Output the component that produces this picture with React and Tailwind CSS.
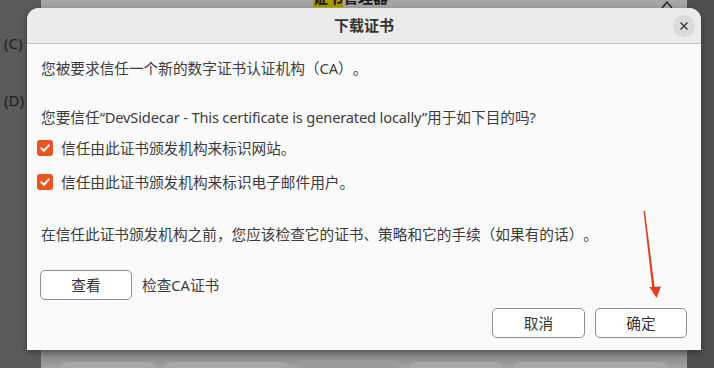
import React from "react";

const font = { fontFamily: '"Noto Sans", "Noto Sans CJK SC", sans-serif' };

const Check = () => (
  <span className="w-4 h-4 rounded-[3px] bg-[#e95420] flex items-center justify-center shrink-0">
    <svg width="12" height="12" viewBox="0 0 12 12" fill="none">
      <path d="M2.3 6.2 L4.9 8.7 L9.8 3.4" stroke="white" strokeWidth="2" strokeLinecap="round" strokeLinejoin="round" />
    </svg>
  </span>
);

const Button = ({ children, className = "" }) => (
  <button className={`h-[30px] rounded-[5px] border border-[#8f8ca0] bg-white text-[14.67px] text-[#333] ${className}`}>
    {children}
  </button>
);

const App = () => {
  return (
    <div className="relative w-[714px] h-[368px] overflow-hidden bg-[#4f4f4f] [text-spacing-trim:space-all]" style={font}>
      {/* left window strip */}
      <div className="absolute left-0 top-0 w-[41px] h-full bg-[#5a5a5a] text-[#1c1c1c] text-[15px]">
        <div className="absolute left-[4px] top-[32px]">(C)</div>
        <div className="absolute left-[4px] top-[89px]">(D)</div>
      </div>

      {/* parent window behind dialog */}
      <div className="absolute left-[41px] top-0 w-[646px] h-full bg-[#9d9d9d] flex flex-col">
        <div className="relative h-[9px] bg-[#a6a6a6] overflow-hidden">
          <div className="absolute left-[272px] top-[-13px] text-[15px] font-bold text-[#1c1c1c] leading-[20px]">
            <span className="bg-[#a89600]">证书</span>管理器
          </div>
          <svg className="absolute left-[620px] top-[-3px]" width="12" height="12" viewBox="0 0 12 12">
            <path d="M1 11 L6 5 L11 11" stroke="#1c1c1c" strokeWidth="1.3" fill="none" />
          </svg>
        </div>
        <div className="flex-1" />
        <div className="h-[18px] bg-gradient-to-b from-[#7e7e7e] to-[#a3a3a3] flex gap-[10px] px-[20px] items-end">
          <div className="w-[95px] h-[6px] rounded-t-[6px] bg-[#a8a8a8]" />
          <div className="w-[125px] h-[6px] rounded-t-[6px] bg-[#a8a8a8]" />
          <div className="w-[100px] h-[8px] rounded-t-[6px] bg-[#9a9a9a]" />
          <div className="w-[95px] h-[6px] rounded-t-[6px] bg-[#a8a8a8]" />
          <div className="w-[155px] h-[6px] rounded-t-[6px] bg-[#a8a8a8]" />
        </div>
      </div>

      {/* dialog */}
      <div className="absolute left-[27px] top-[8px] w-[674px] h-[342px] rounded-t-[12px] bg-[#fafafa] flex flex-col shadow-[0_2px_6px_rgba(0,0,0,0.35)]">
        <div className="relative h-[36px] rounded-t-[12px] bg-[#ebebeb] border-b border-[#c4c4c4] flex items-center justify-center">
          <span className="text-[15px] font-bold text-[#333]">下载证书</span>
          <button className="absolute right-[6px] top-[7px] w-[22px] h-[22px] rounded-full bg-[#dadada] flex items-center justify-center">
            <svg width="10" height="10" viewBox="0 0 10 10">
              <path d="M1.5 1.5 L8.5 8.5 M8.5 1.5 L1.5 8.5" stroke="#3a3a3a" strokeWidth="1.4" />
            </svg>
          </button>
        </div>

        <div className="flex-1 flex flex-col px-[14px] pt-[14px] pb-[12px] text-[14.67px] leading-[20px] text-[#3c3c3c]">
          <p>您被要求信任一个新的数字证书认证机构（CA）。</p>
          <p className="mt-[29px]">
            您要信任<span className="tracking-[-0.17px]">“DevSidecar - This certificate is generated locally”</span>用于如下目的吗?
          </p>
          <label className="mt-[11px] flex items-center gap-[8px] -ml-[4px]">
            <Check />
            <span>信任由此证书颁发机构来标识网站。</span>
          </label>
          <label className="mt-[14px] flex items-center gap-[8px] -ml-[4px]">
            <Check />
            <span>信任由此证书颁发机构来标识电子邮件用户。</span>
          </label>
          <p className="mt-[32px]">在信任此证书颁发机构之前，您应该检查它的证书、策略和它的手续（如果有的话）。</p>
          <div className="mt-[26px] flex items-center gap-[10px] -ml-[1px]">
            <Button className="w-[92px] h-[29px]">查看</Button>
            <span>检查CA证书</span>
          </div>
          <div className="flex-1" />
          <div className="flex justify-end gap-[10px]">
            <Button className="w-[93px]">取消</Button>
            <Button className="w-[92px]">确定</Button>
          </div>
        </div>
      </div>

      {/* annotation arrow */}
      <svg className="absolute left-0 top-0" width="714" height="368" viewBox="0 0 714 368">
        <polygon points="643.5,211 645,211 655,290 652.5,290" fill="#e0401c" />
        <polygon points="649.5,287 661,286.5 656.5,298" fill="#e0401c" />
      </svg>
    </div>
  );
};

export default App;
